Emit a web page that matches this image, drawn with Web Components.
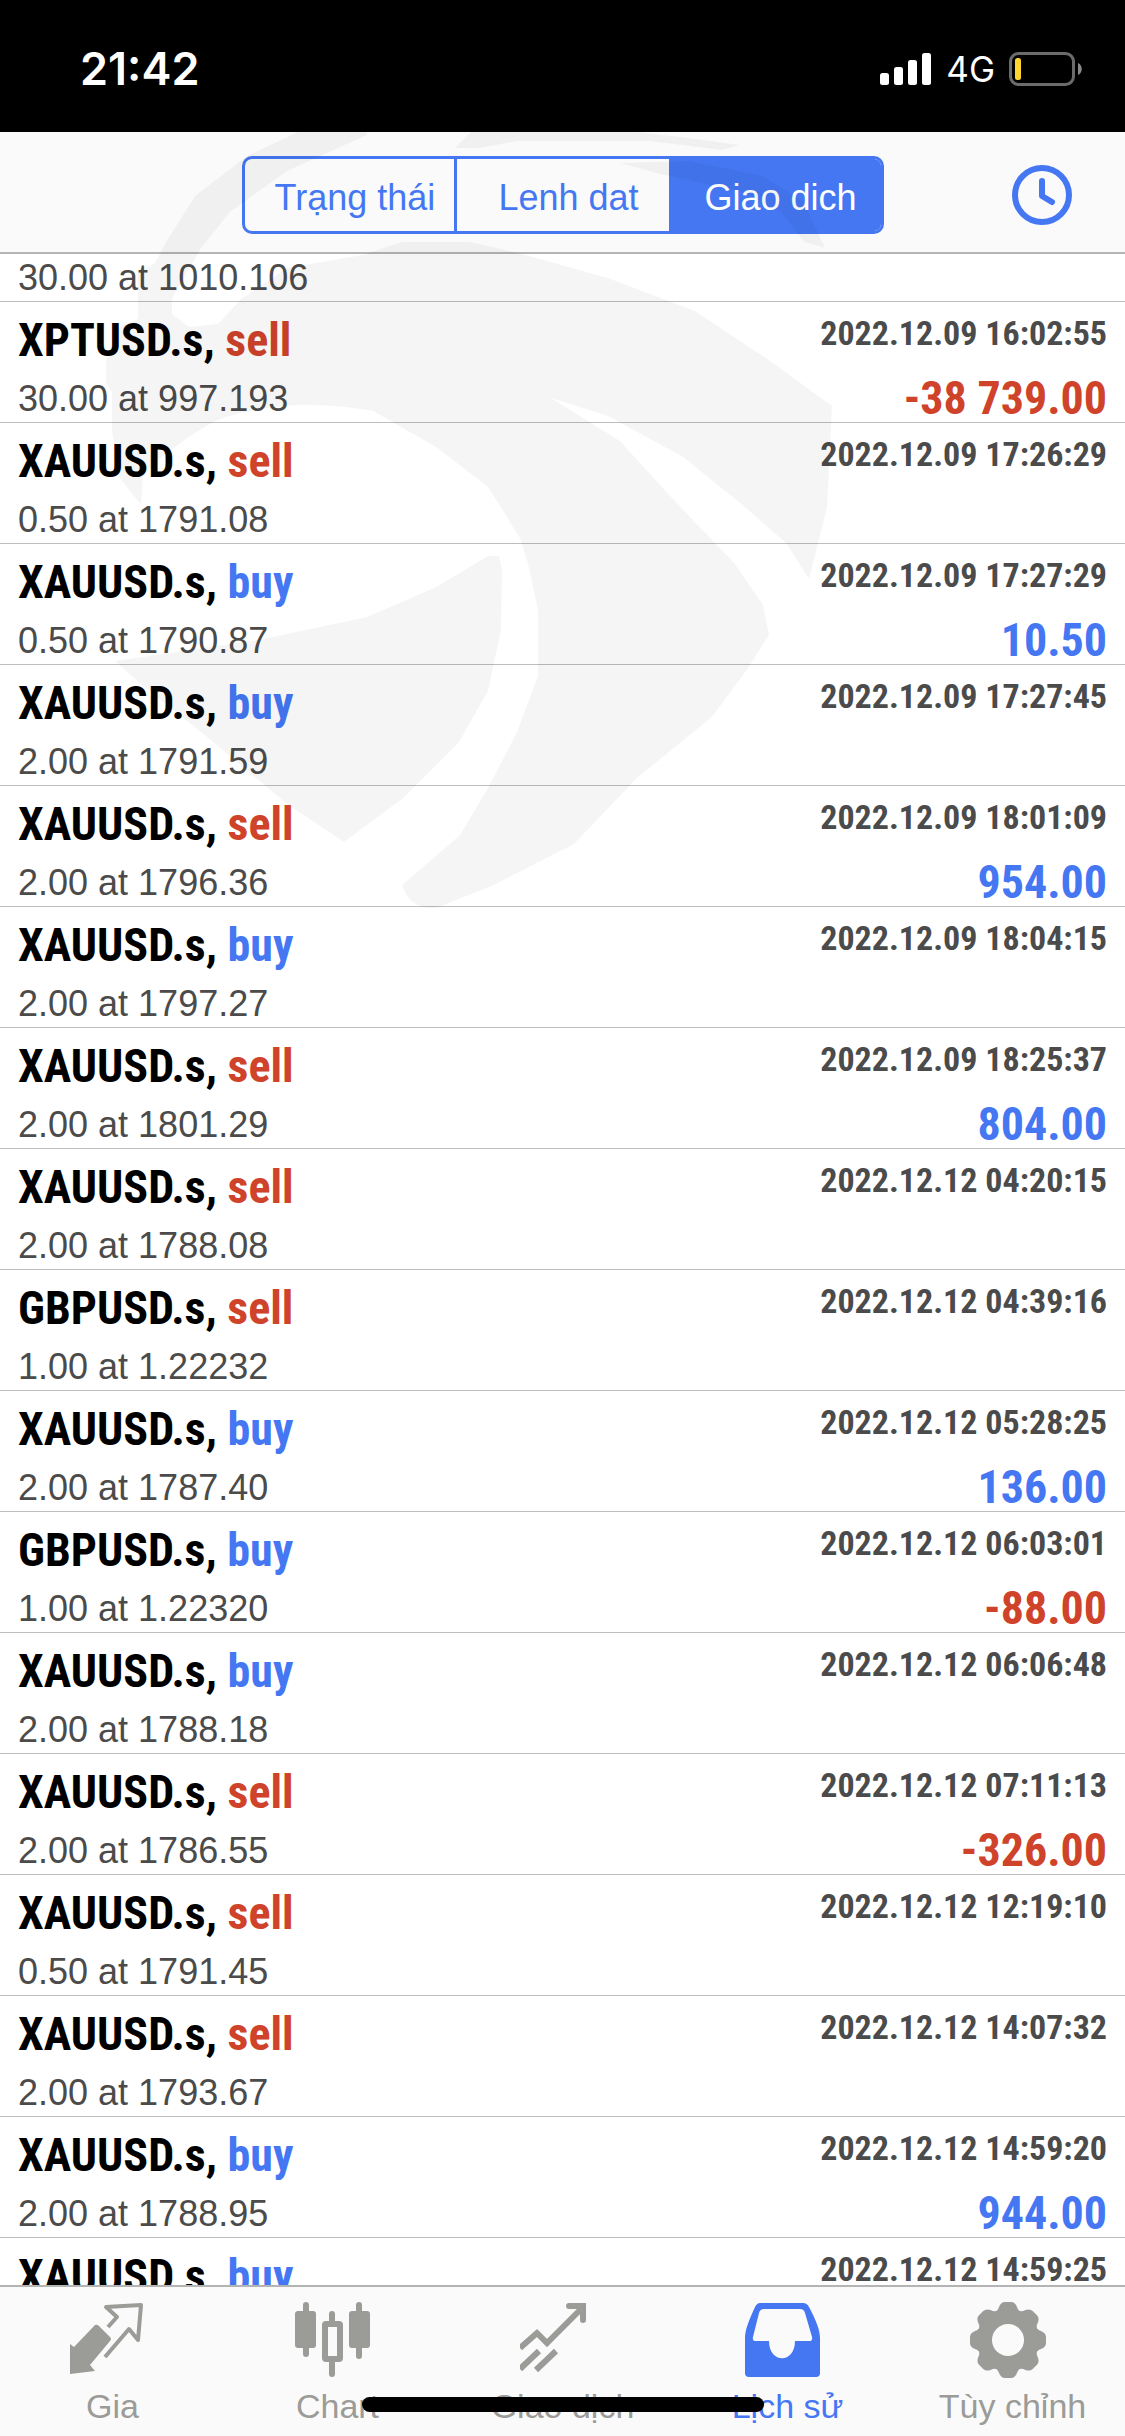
<!DOCTYPE html>
<html lang="vi"><head><meta charset="utf-8"><title>Lịch sử</title>
<style>
html,body{margin:0;height:100%}
body{font-family:"Liberation Sans",Arial,sans-serif;background:#fff}
</style></head><body>
<history-app></history-app>
<script>
const BLUE='#4577f3';
function define(name,css,html,connected){
  const t=document.createElement('template');
  t.innerHTML='<style>'+css+'</style>'+html;
  customElements.define(name,class extends HTMLElement{
    constructor(){super();this.attachShadow({mode:'open'}).append(t.content.cloneNode(true));}
    connectedCallback(){if(connected)connected(this,this.shadowRoot);}
  });
}

define('status-bar',`
:host{display:flex;flex:none;height:132px;box-sizing:border-box;padding:6px 43px 0 80px;align-items:center;justify-content:space-between;background:#000;color:#fff}
.time{font:600 45px/52px Inter,sans-serif}
.right{display:flex;align-items:center;gap:14px}
.net{font:400 35px/44px Inter,sans-serif}
svg{display:block}`,
`<span class="time"><slot></slot></span>
<div class="right">
<svg width="52" height="34" viewBox="0 0 52 34" fill="#fff"><rect x="0" y="21" width="9" height="12" rx="2.5"/><rect x="14" y="15" width="9" height="18" rx="2.5"/><rect x="28" y="8" width="9" height="25" rx="2.5"/><rect x="42" y="1" width="9" height="32" rx="2.5"/></svg>
<span class="net"><slot name="net"></slot></span>
<svg width="73" height="34" viewBox="0 0 73 34"><rect x="1.5" y="1.5" width="63" height="31" rx="8" fill="none" stroke="#6b6b6d" stroke-width="3"/><path d="M69 11c5 2 5 10 0 12z" fill="#8a8a8a"/><rect x="6" y="6" width="6" height="22" rx="2.5" fill="#ffd52e"/></svg>
</div>`);

define('nav-bar',`
:host{display:grid;grid-template-columns:1fr minmax(0,642px) 1fr;flex:none;height:122px;box-sizing:border-box;padding-top:6px;align-items:center;background:#fafafa;border-bottom:2px solid #b4b4b4}
.tabs{grid-column:2;display:flex;height:78px;box-sizing:border-box;border:3px solid ${BLUE};border-radius:10px;overflow:hidden}
button{justify-self:end;margin-right:52px;padding:0;border:0;background:none;display:block}
svg{display:block}`,
`<div class="tabs" role="tablist"><slot></slot></div>
<button aria-label="Period"><svg width="62" height="62" viewBox="0 0 62 62" fill="none" stroke="${BLUE}" stroke-width="6"><circle cx="31" cy="31" r="27"/><path d="M31 17V32l10 6" stroke-linecap="round" stroke-linejoin="round"/></svg></button>`);

define('seg-tab',`
:host{display:flex;flex:1 1 0}
button{flex:1;border:0;padding:6px 0 0 12px;background:none;font:36px/40px "Liberation Sans",Arial,sans-serif;color:${BLUE}}
:host(:first-child) button{border-right:3px solid ${BLUE}}
:host([selected]) button{background:${BLUE};color:#fff}`,
`<button role="tab"><slot></slot></button>`);

define('deal-row',`
:host{display:flex;flex:none;height:121px;box-sizing:border-box;padding:13px 18px 0;justify-content:space-between;border-bottom:1px solid #bdbdbd}
.l,.r{display:flex;flex-direction:column}
.r{align-items:flex-end;font-family:"Roboto Condensed","Liberation Sans",sans-serif;font-weight:700}
.sym{font:700 46px/50px "Roboto Condensed","Liberation Sans",sans-serif;color:#000}
.vol{font-size:36px;line-height:40px;margin-top:14px;color:#4b4b4b}
.date{font-size:34px;line-height:36px;color:#4b4b4b}
.val{font-size:46px;line-height:50px;margin-top:22px}
.buy,.pos{color:${BLUE}}.sell,.neg{color:#cf432b}`,
`<div class="l"><div class="sym"><span id="s"></span>, <span id="k"></span></div><div class="vol"></div></div><div class="r"><div class="date"></div><div class="val"></div></div>`,
(host,root)=>{
  const q=s=>root.querySelector(s),d=host.dataset;
  q('#s').textContent=d.symbol;q('#k').textContent=d.side;q('#k').className=d.side;
  q('.vol').textContent=d.volume;q('.date').textContent=d.time;
  q('.val').textContent=d.profit;q('.val').classList.add(d.profit[0]==='-'?'neg':'pos');
});

const deals=[
['XPTUSD.s','sell','30.00 at 997.193','2022.12.09 16:02:55','-38 739.00'],
['XAUUSD.s','sell','0.50 at 1791.08','2022.12.09 17:26:29',''],
['XAUUSD.s','buy','0.50 at 1790.87','2022.12.09 17:27:29','10.50'],
['XAUUSD.s','buy','2.00 at 1791.59','2022.12.09 17:27:45',''],
['XAUUSD.s','sell','2.00 at 1796.36','2022.12.09 18:01:09','954.00'],
['XAUUSD.s','buy','2.00 at 1797.27','2022.12.09 18:04:15',''],
['XAUUSD.s','sell','2.00 at 1801.29','2022.12.09 18:25:37','804.00'],
['XAUUSD.s','sell','2.00 at 1788.08','2022.12.12 04:20:15',''],
['GBPUSD.s','sell','1.00 at 1.22232','2022.12.12 04:39:16',''],
['XAUUSD.s','buy','2.00 at 1787.40','2022.12.12 05:28:25','136.00'],
['GBPUSD.s','buy','1.00 at 1.22320','2022.12.12 06:03:01','-88.00'],
['XAUUSD.s','buy','2.00 at 1788.18','2022.12.12 06:06:48',''],
['XAUUSD.s','sell','2.00 at 1786.55','2022.12.12 07:11:13','-326.00'],
['XAUUSD.s','sell','0.50 at 1791.45','2022.12.12 12:19:10',''],
['XAUUSD.s','sell','2.00 at 1793.67','2022.12.12 14:07:32',''],
['XAUUSD.s','buy','2.00 at 1788.95','2022.12.12 14:59:20','944.00'],
['XAUUSD.s','buy','','2022.12.12 14:59:25','']];
define('deal-list',`
:host{display:flex;flex-direction:column;flex:1;min-height:0;overflow:hidden}
.first{flex:none;height:48px;box-sizing:border-box;padding:4px 18px 0;font-size:36px;line-height:40px;color:#4b4b4b;border-bottom:1px solid #bdbdbd}`,
`<div class="first">30.00 at 1010.106</div>`,
(host,root)=>{
  for(const [symbol,side,volume,time,profit] of deals){
    const r=document.createElement('deal-row');
    Object.assign(r.dataset,{symbol,side,volume,time,profit});
    root.append(r);
  }
});

define('tab-item',`
:host{display:flex;flex:1 1 0}
button{flex:1;display:flex;flex-direction:column;align-items:center;gap:4px;border:0;padding:15px 0 0;background:none;color:#9b9b98;font:34px/40px "Liberation Sans",Arial,sans-serif}
::slotted(svg){margin-right:10px}
:host([selected]) button{color:${BLUE}}`,
`<button><slot name="icon"></slot><span><slot></slot></span></button>`);

define('tab-bar',`
:host{display:flex;flex:none;height:151px;box-sizing:border-box;background:#fafafa;border-top:2px solid #b4b4b4;position:relative}
.home{position:absolute;left:50%;bottom:24px;width:402px;height:15px;margin-left:-201px;border-radius:8px;background:#000}`,
`<slot></slot><div class="home"></div>`);

const teeth=[0,45,90,135,180,225,270,315].map(a=>`<path transform="rotate(${a} 38 38)" d="M23 11Q28 9 29 5 31 0 35 0H41Q45 0 47 5 48 9 53 11L38 30z"/>`).join('');
define('history-app',`
:host{display:flex;flex-direction:column;height:100vh;position:relative;overflow:hidden}
.mark{position:absolute;left:0;top:132px;pointer-events:none}`,
`<status-bar>21:42<span slot="net">4G</span></status-bar>
<nav-bar><seg-tab>Trạng thái</seg-tab><seg-tab>Lenh dat</seg-tab><seg-tab selected>Giao dich</seg-tab></nav-bar>
<deal-list></deal-list>
<tab-bar>
<tab-item><svg slot="icon" width="76" height="80" viewBox="0 0 76 80"><path d="M0 42l4 3L25 23q2-1 4 1l11 11q2 2 0 4L20 63l5 6L0 72z" fill="currentColor"/><path d="M38 25l9-10-11-10 35-2-3 35-9-11-24 28" fill="none" stroke="currentColor" stroke-width="4" stroke-linejoin="round"/></svg>Gia</tab-item>
<tab-item><svg slot="icon" width="76" height="80" viewBox="0 0 76 80" fill="currentColor"><rect x="0" y="9" width="21" height="37" rx="3"/><rect x="8" y="0" width="6" height="55" rx="3"/><rect x="54" y="9" width="21" height="37" rx="3"/><rect x="61" y="0" width="6" height="57" rx="3"/><rect x="30" y="22" width="15" height="35" rx="1" fill="none" stroke="currentColor" stroke-width="6"/><rect x="34" y="9" width="6" height="14" rx="3"/><rect x="34" y="58" width="6" height="17" rx="3"/></svg>Chart</tab-item>
<tab-item><svg slot="icon" width="76" height="80" viewBox="0 0 76 80" fill="none" stroke="currentColor" stroke-width="6"><path d="M0 46l17-15 10 10L61 7"/><path d="M49 4h14v14" stroke-linecap="round"/><path d="M0 67l19-18M16 68l20-19"/></svg>Giao dịch</tab-item>
<tab-item selected><svg slot="icon" width="76" height="80" viewBox="0 0 76 80"><path fill="currentColor" fill-rule="evenodd" d="M15 1h43q4 0 6 4c7 13 11 23 11 31v35q0 4-4 4H4q-4 0-4-4V36C0 28 4 18 10 5q2-4 5-4zM19 7q-4 0-5 4L8 35q-1 4 3 4h13c0 23 26 23 26 0h14q4 0 3-4L60 11q-1-4-5-4z"/></svg>Lịch sử</tab-item>
<tab-item><svg slot="icon" width="76" height="80" viewBox="0 0 76 80" fill="currentColor">${teeth}<circle cx="38" cy="38" r="23" fill="none" stroke="currentColor" stroke-width="16"/><circle cx="38" cy="38" r="16" fill="#fafafa"/></svg>Tùy chỉnh</tab-item>
</tab-bar>
<svg class="mark" width="840" height="780" viewBox="0 132 840 780" fill="#000" fill-opacity=".04">
<path d="M298 132L247 156 195 196 166 242 155 263 138 273V319L120 326 106 360V383L112 392V431L119 477 141 505 143 477 155 462 190 436 215 421Q287 395 373 411L436 447 488 487 520 538 528 564 538 610V676L517 732 488 788 460 835 402 885Q410 910 436 908L494 885 574 844 637 778 712 717 746 671 769 635 763 605 735 564 672 498 620 441 551 398 608 416 683 457 740 503 786 543 809 579 827 508 832 406 769 360 695 311 608 278 522 254 471 242H402L362 255 287 268 241 299 218 324 189 327 172 314V299L201 248 230 212 287 171 367 135V132z"/>
<path d="M499 556H488L436 587 367 617 258 640 115 661 143 686 201 732 287 804 344 842 402 799 459 742 488 691 501 630 502 570z"/>
<path d="M455 148L471 132H637L689 138 740 145 722 150 649 141H517L480 148z"/>
<path d="M620 163L689 161 763 176 804 202 825 248 804 242 781 212 740 191 660 174z"/>
</svg>`);
</script></body></html>
